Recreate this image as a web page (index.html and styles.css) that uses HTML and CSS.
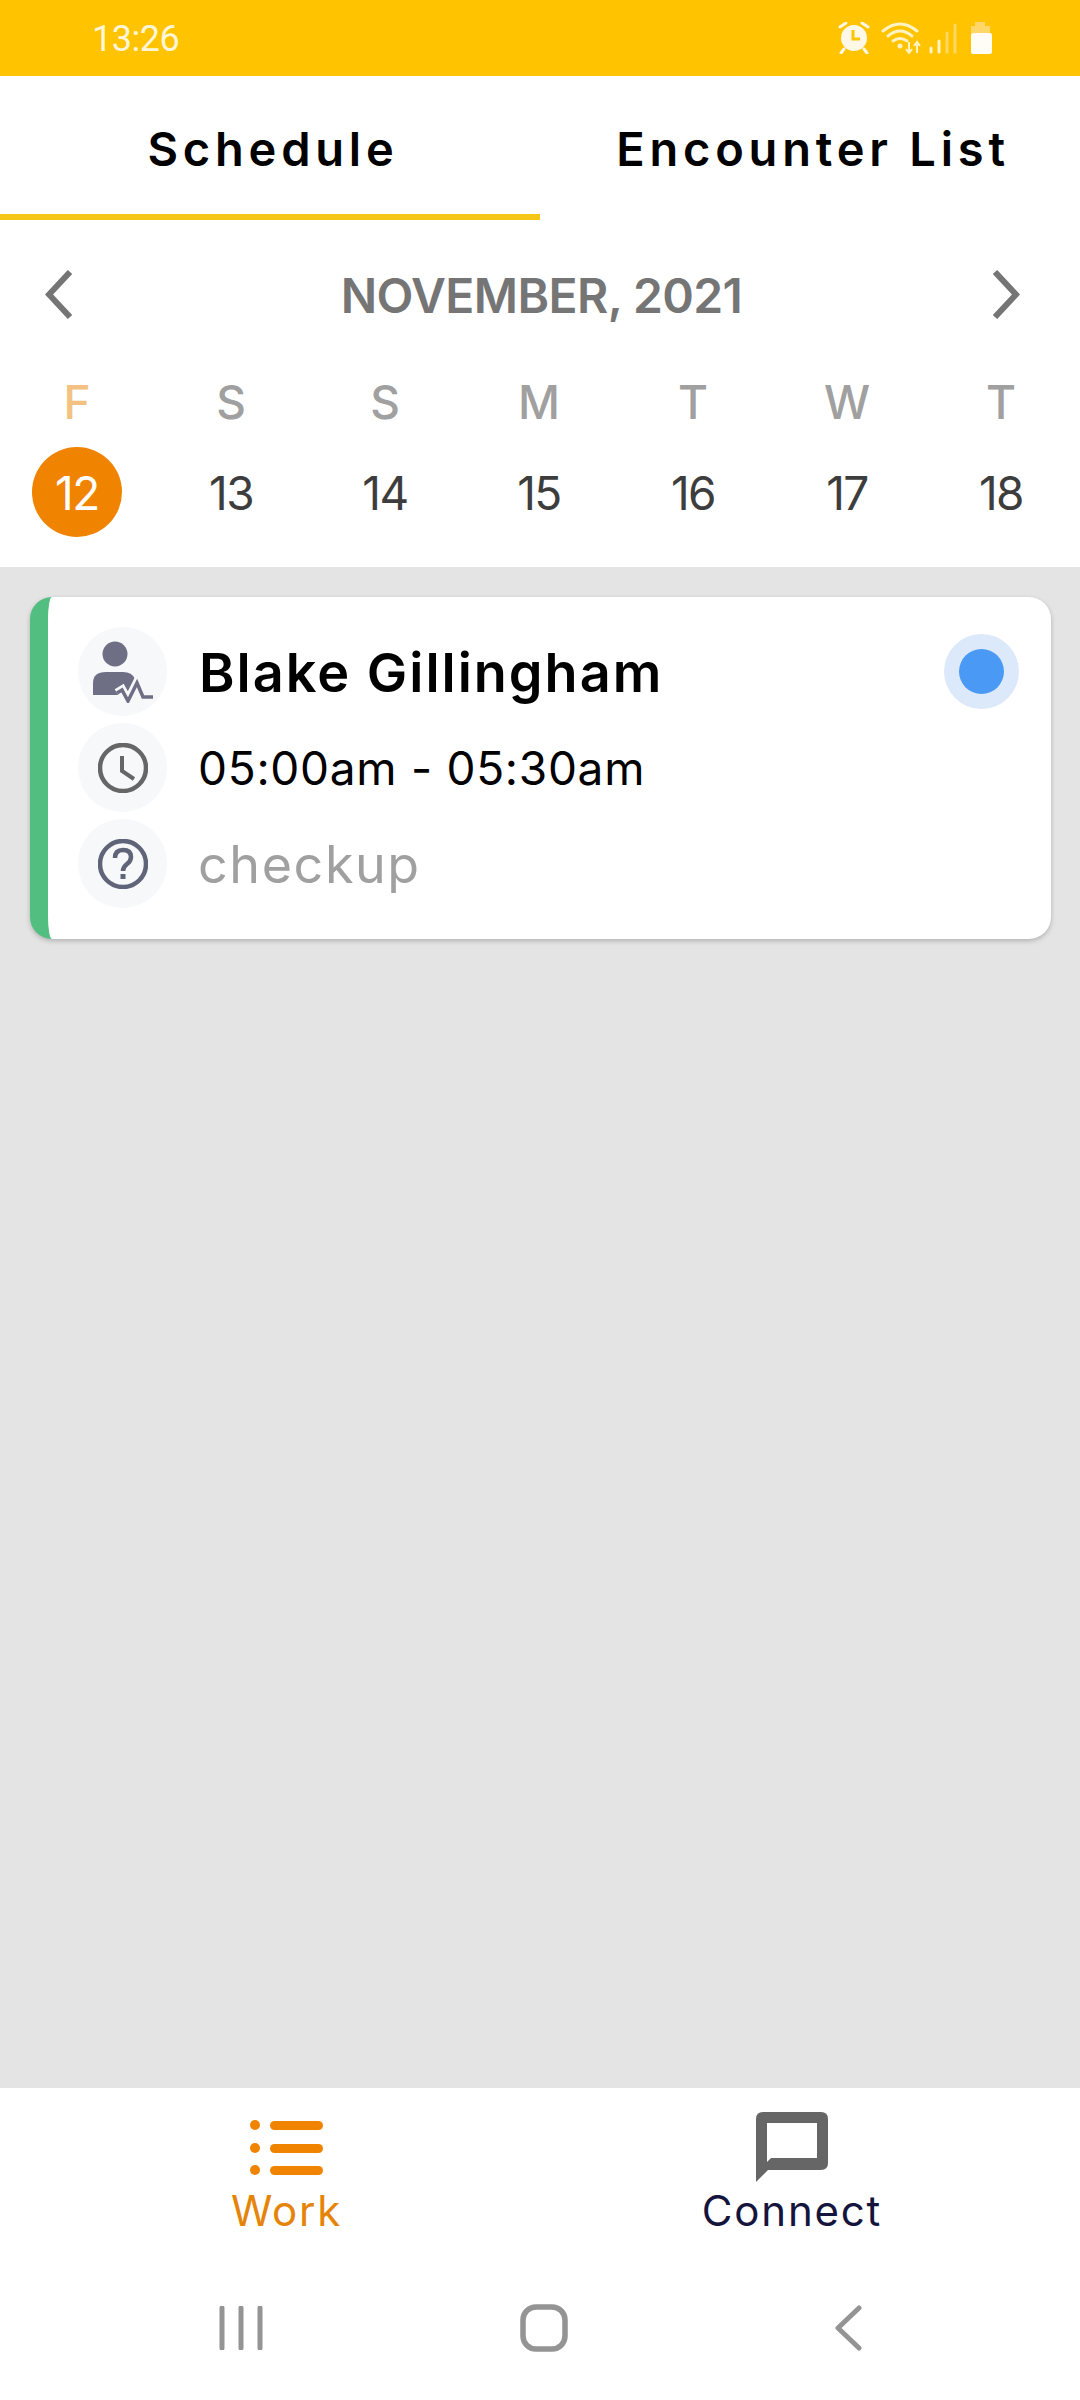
FILE: index.html
```html
<!DOCTYPE html>
<html lang="en">
<head>
<meta charset="utf-8">
<title>Schedule</title>
<link rel="stylesheet" href="styles.css">
</head>
<body>
<div class="app">
  <header class="status">
    <span class="clock-time">13:26</span>
    <svg class="status-icons" width="154" height="32" viewBox="0 0 154 32">
      <g fill="none" stroke="#fff8e6" stroke-linecap="round">
        <path d="M2 5 L8 1 M30 5 L24 1" stroke-width="3"/>
        <path d="M6 27 L3 31 M26 27 L29 31" stroke-width="3"/>
      </g>
      <circle cx="16" cy="16" r="13" fill="#fff8e6"/>
      <path d="M15 8 V17 H22" fill="none" stroke="#ffc300" stroke-width="3"/>
      <g fill="none" stroke="#fff3c4" stroke-width="3" stroke-linecap="round">
        <path d="M45 9 Q62 -5 79 9"/>
        <path d="M50 14 Q62 4 74 14"/>
        <path d="M55 19 Q62 14 69 19"/>
      </g>
      <circle cx="62" cy="24" r="2.5" fill="#fff3c4"/>
      <path d="M71 20 V30 M68 27 L71 31 L74 27 M79 31 V21 M76 24 L79 20 L82 24" fill="none" stroke="#fff3c4" stroke-width="2"/>
      <g fill="none" stroke-width="3" stroke-linecap="round">
        <path d="M93 26 V30" stroke="#fff3c4"/>
        <path d="M101 19 V30" stroke="#fff3c4"/>
        <path d="M109 11 V30" stroke="#ffd860"/>
        <path d="M117 3 V30" stroke="#ffd860"/>
      </g>
      <path d="M137 0 H147 V4 H152 V11 H133 V4 H137 Z" fill="#ffd668"/>
      <rect x="133" y="11" width="21" height="21" rx="2" fill="#fffdf5"/>
    </svg>
  </header>

  <nav class="tabs">
    <div class="tab tab-active">Schedule</div>
    <div class="tab">Encounter List</div>
  </nav>

  <section class="calendar">
    <div class="month-row">
      <svg class="chev" width="27" height="49" viewBox="0 0 27 49"><path d="M25 2 L4 24.500 L25 47" /></svg>
      <div class="month">NOVEMBER, 2021</div>
      <svg class="chev" width="27" height="49" viewBox="0 0 27 49"><path d="M2 2 L23 24.500 L2 47" /></svg>
    </div>
    <div class="week">
      <div class="day day-active"><span class="dow">F</span><span class="num">12</span></div>
      <div class="day"><span class="dow">S</span><span class="num">13</span></div>
      <div class="day"><span class="dow">S</span><span class="num">14</span></div>
      <div class="day"><span class="dow">M</span><span class="num">15</span></div>
      <div class="day"><span class="dow">T</span><span class="num">16</span></div>
      <div class="day"><span class="dow">W</span><span class="num">17</span></div>
      <div class="day"><span class="dow">T</span><span class="num">18</span></div>
    </div>
  </section>

  <main class="content">
    <article class="card">
      <div class="row">
        <span class="icon-wrap">
          <svg width="60" height="62" viewBox="0 0 60 62">
            <circle cx="22" cy="13" r="12.5" fill="#6e6f85"/>
            <path d="M0 54 V42 Q0 31 13 31 H30 Q39 31 42 38 L42 54 Z" fill="#6e6f85"/>
            <path d="M24 52 L29 49 L35 60 L44 42 L50 56 L60 56" fill="none" stroke="#f7f8f9" stroke-width="9"/>
            <path d="M24 52 L29 49 L35 60 L44 42 L50 56 L60 56" fill="none" stroke="#6e6f85" stroke-width="3.5"/>
          </svg>
        </span>
        <span class="name">Blake Gillingham</span>
        <span class="status-dot"></span>
      </div>
      <div class="row">
        <span class="icon-wrap">
          <svg width="50" height="50" viewBox="0 0 50 50">
            <circle cx="25" cy="25" r="23" fill="none" stroke="#666" stroke-width="4.5"/>
            <path d="M24 13 V28 L36 36" fill="none" stroke="#666" stroke-width="4"/>
          </svg>
        </span>
        <span class="time">05:00am - 05:30am</span>
      </div>
      <div class="row">
        <span class="icon-wrap">
          <svg width="50" height="50" viewBox="0 0 50 50">
            <circle cx="25" cy="25" r="23" fill="none" stroke="#5f6478" stroke-width="4.5"/>
            <path d="M17 19 Q17 11 25 11 Q33 11 33 18 Q33 22 29 25 Q25 28 25 32" fill="none" stroke="#5f6478" stroke-width="4.5"/>
            <rect x="22.500" y="35" width="5" height="5" fill="#5f6478"/>
          </svg>
        </span>
        <span class="reason">checkup</span>
      </div>
    </article>
  </main>

  <footer class="bottom">
    <div class="bottom-tabs">
      <div class="btab btab-work">
        <svg class="btab-icon" width="73" height="70" viewBox="0 0 73 70">
          <g fill="#f08300">
            <circle cx="5" cy="13" r="5"/><rect x="20" y="9" width="53" height="9" rx="4.500"/>
            <circle cx="5" cy="36" r="5"/><rect x="20" y="32" width="53" height="9" rx="4.500"/>
            <circle cx="5" cy="58" r="5"/><rect x="20" y="54" width="53" height="9" rx="4.500"/>
          </g>
        </svg>
        <span>Work</span>
      </div>
      <div class="btab btab-connect">
        <svg class="btab-icon" width="73" height="70" viewBox="0 0 73 70">
          <path fill-rule="evenodd" fill="#666" d="M7 0 H65 Q72 0 72 7 V51 Q72 58 65 58 H12 L0 70 V7 Q0 0 7 0 Z M11 11 V50 L15 46 H61 V11 Z"/>
        </svg>
        <span>Connect</span>
      </div>
    </div>
    <div class="sysnav">
      <svg width="44" height="44" viewBox="0 0 44 44"><path d="M3 2 V42 M22 2 V42 M41 2 V42" fill="none" stroke="#949494" stroke-width="5" stroke-linecap="round"/></svg>
      <svg class="nav-home" width="48" height="48" viewBox="0 0 48 48"><rect x="3" y="3" width="42" height="42" rx="13" fill="none" stroke="#949494" stroke-width="5.500"/></svg>
      <svg class="nav-back" width="28" height="46" viewBox="0 0 28 46"><path d="M25 3 L4 23 L25 43" fill="none" stroke="#949494" stroke-width="5" stroke-linecap="round" stroke-linejoin="round"/></svg>
    </div>
  </footer>
</div>
</body>
</html>
```
FILE: styles.css
```css
* { box-sizing: border-box; }
html, body { margin: 0; padding: 0; }
body { font-family: Inter, "Liberation Sans", sans-serif; background: #fff; }

.app { width: 1080px; height: 2400px; display: flex; flex-direction: column; }

.status {
  height: 76px;
  flex: none;
  background: #ffc300;
  display: flex;
  align-items: flex-start;
  justify-content: space-between;
  padding: 21px 88px 0 92px;
}
.clock-time {
  font-family: Roboto, sans-serif;
  font-weight: 400;
  font-size: 36px;
  line-height: 37px;
  letter-spacing: -0.5px;
  color: #fff6d8;
}
.status-icons { display: block; margin-top: 1px; }

.tabs { height: 144px; flex: none; display: flex; background: #fff; }
.tab {
  width: 540px;
  display: flex;
  align-items: center;
  justify-content: center;
  padding-left: 6px;
  font-size: 47px;
  font-weight: 600;
  letter-spacing: 4.8px;
  color: #000;
}
.tab-active { box-shadow: inset 0 -6px 0 #f5c518; }

.calendar { height: 347px; flex: none; background: #fff; padding-top: 49px; }
.month-row {
  display: flex;
  align-items: center;
  justify-content: space-between;
  padding: 0 60px 0 45px;
  height: 51px;
}
.chev path { fill: none; stroke: #757575; stroke-width: 6; }
.month { font-size: 48px; font-weight: 600; color: #757575; letter-spacing: -0.6px; margin-left: 18px; padding-top: 2px; }
.week { display: flex; margin-top: 54px; }
.day { width: 154px; display: flex; flex-direction: column; align-items: center; }
.dow { font-size: 46px; line-height: 56px; font-weight: 500; color: #a0a0a0; height: 56px; }
.num {
  width: 90px;
  height: 90px;
  margin-top: 17px;
  padding-top: 1px;
  border-radius: 50%;
  display: flex;
  align-items: center;
  justify-content: center;
  font-size: 46px;
  color: #3d3d3d;
  letter-spacing: -1.5px;
}
.day-active .dow { color: #f3c283; }
.day-active .num { background: #f08300; color: #fff; }

.content { flex: 1; background: #e4e4e4; padding: 30px 29px 0 30px; }
.card {
  height: 342px;
  background: #fff;
  border-left: 18px solid #52be80;
  border-radius: 22px;
  box-shadow: 0 2px 5px rgba(0,0,0,.22);
  padding: 30px 30px 0 30px;
  display: flex;
  flex-direction: column;
  gap: 7px;
}
.row { display: flex; align-items: center; gap: 32px; height: 89px; }
.icon-wrap {
  width: 89px;
  height: 89px;
  flex: none;
  border-radius: 50%;
  background: #f7f8f9;
  display: flex;
  align-items: center;
  justify-content: center;
}
.name { font-size: 54px; font-weight: 600; color: #000; letter-spacing: 2px; flex: 1; padding-top: 2px; }
.status-dot {
  width: 45px;
  height: 45px;
  margin-right: 17px;
  border-radius: 50%;
  background: #4a9af5;
  box-shadow: 0 0 0 15px #dce9fa;
}
.time { font-size: 46px; color: #000; letter-spacing: 0.7px; margin-left: -1px; }
.reason { font-size: 52px; color: #a0a0a0; letter-spacing: 1.6px; margin-left: -1px; padding-top: 2px; }

.bottom { height: 312px; flex: none; background: #fff; }
.bottom-tabs { display: flex; height: 216px; }
.btab { display: flex; flex-direction: column; align-items: center; }
.btab-work { width: 573px; }
.btab-connect { width: 507px; padding-right: 69px; }
.btab-icon { display: block; margin-top: 24px; }
.btab span { font-size: 42px; line-height: 44px; margin-top: 7px; letter-spacing: 1.8px; }
.btab-work span { color: #e58409; }
.btab-connect span { color: #14143c; }
.sysnav {
  display: flex;
  align-items: center;
  height: 48px;
  padding-left: 219px;
}
.nav-home { margin-left: 257px; }
.nav-back { margin-left: 266px; }
```
